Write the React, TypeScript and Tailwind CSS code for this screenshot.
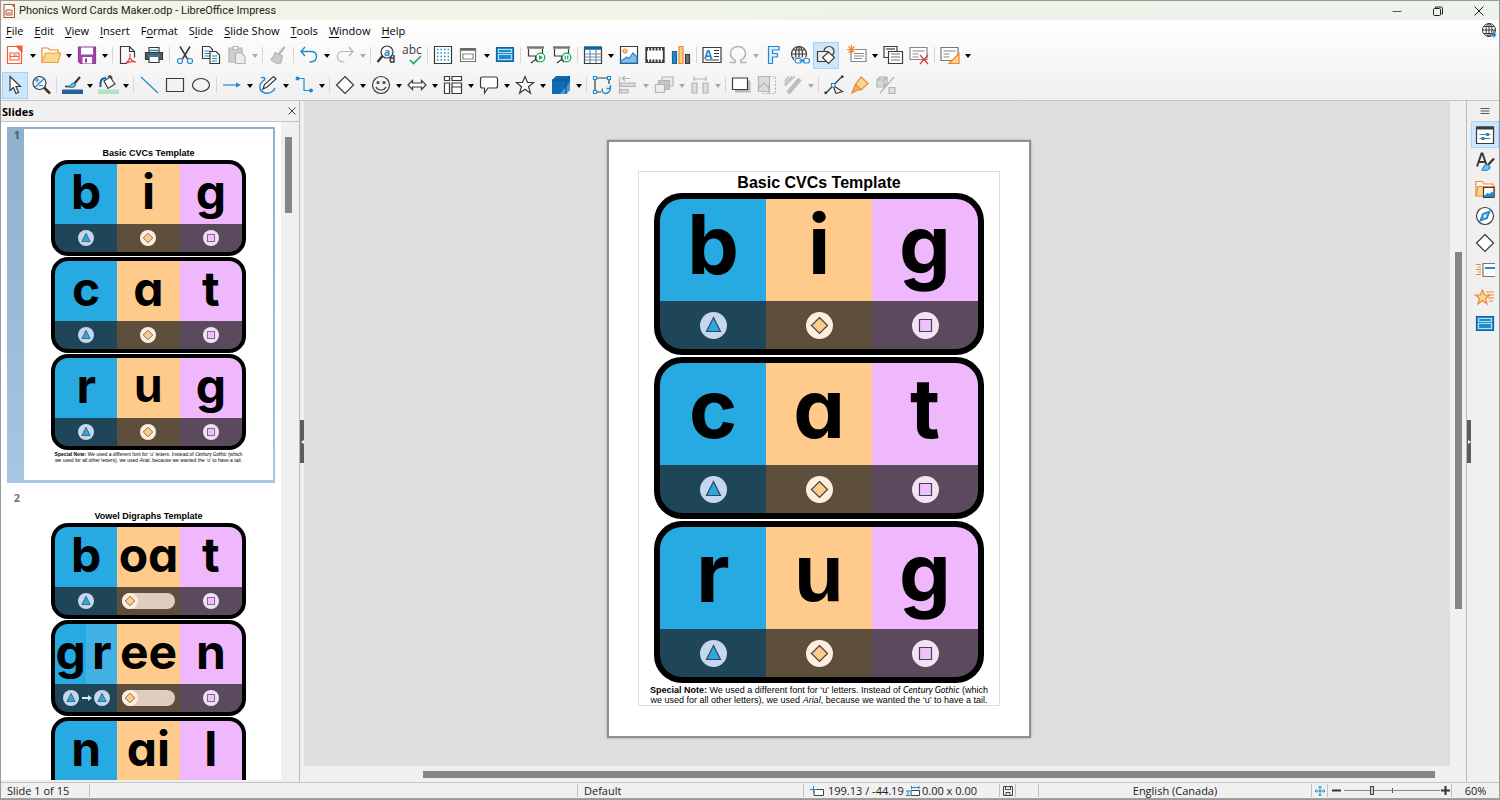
import type { ReactNode } from 'react';

const INK = '#3a3a38';
const BLUE = '#1e8bcd';
const ORANGE = '#ed8733';
const GREY = '#b4b4b4';

function Svg({ children }: { children: ReactNode }) {
  return (
    <svg viewBox="0 0 20 20" className="h-5 w-5 shrink-0 overflow-visible" fill="none" stroke={INK} strokeWidth="1.2" aria-hidden="true">
      {children}
    </svg>
  );
}

const icons: Record<string, ReactNode> = {
  newDoc: (
    <Svg>
      <path d="M2.500 1.500h9l5 5v12h-14z" fill="#fff" stroke="#f0603f" />
      <path d="M12 1h5v5z" fill="#f0603f" stroke="#f0603f" />
      <path d="M5 8h9v7H5zM5 11.500h9M8 10h4" stroke="#f0603f" />
    </Svg>
  ),
  open: (
    <Svg>
      <path d="M1 17V3h6l2 2h8v3" stroke={ORANGE} fill="#fff" />
      <path d="M1 17.500 4.500 8h15L17 17.500z" fill="#fad78f" stroke="#e9a33c" />
    </Svg>
  ),
  save: (
    <Svg>
      <path d="M1.500 2h17v16.500H3.500l-2-2z" fill="#a046a8" stroke="#8e3c97" />
      <path d="M4 2.500h12v7H4zM5.500 12h9.500v6.500H5.500z" fill="#fff" stroke="none" />
      <path d="M8 13.500h2v4H8z" fill="#8e3c97" stroke="none" />
    </Svg>
  ),
  pdf: (
    <Svg>
      <path d="M9 18.500H2.500v-17h9l5 5v6M11.500 1.500v5h5" />
      <path d="M8 18c3-2 4.500-6 4-8-1 3 2 7 6 7-4-1-7 0-10 1z" stroke="#e2383f" />
    </Svg>
  ),
  print: (
    <Svg>
      <path d="M5 7V2.500h10V7" fill="#fff" />
      <path d="M1.500 7.500h17v7h-17z" fill="#5a5a58" />
      <path d="M5 11.500h10v6H5z" fill="#fff" />
      <path d="M4 11h12M5.500 5.500h9" stroke={BLUE} strokeWidth="1.400" />
    </Svg>
  ),
  cut: (
    <Svg>
      <path d="M5 1.500 12.500 14M15 1.500 7.500 14" strokeWidth="1.500" />
      <circle cx="5" cy="16" r="2.500" stroke={BLUE} />
      <circle cx="15" cy="16" r="2.500" stroke={BLUE} />
    </Svg>
  ),
  copy: (
    <Svg>
      <path d="M1.500 1.500h7l3 3v9h-10z" fill="#fff" />
      <path d="M3.500 6h6M3.500 8.500h6M3.500 11h6" stroke={BLUE} />
      <path d="M9 6.500h6l3.500 3.500v8.500H9z" fill="#fff" />
      <path d="M11 11h5M11 13.500h5M11 16h5" stroke={BLUE} />
    </Svg>
  ),
  paste: (
    <Svg>
      <path d="M2 3h13v14H2z" fill="#d0d0d0" stroke={GREY} />
      <path d="M6 1.500h5v3H6z" fill="#fff" stroke={GREY} />
      <path d="M8.500 8h6l3.500 3.500v7H8.500z" fill="#ececec" stroke={GREY} />
    </Svg>
  ),
  brush: (
    <Svg>
      <path d="m16.500 2-5.500 7" stroke={GREY} strokeWidth="2.200" />
      <path d="M7 7.500 14.500 11c-.5 3-1 5.500-2.500 7.500C8 18.500 5 17 3 14.500c2-1.500 3.500-4 4-7z" fill="#cacaca" stroke={GREY} />
    </Svg>
  ),
  undo: (
    <Svg>
      <path d="M6 2 2 6.500 6 11M2.500 6.500H12c4 0 5.500 2 5.500 5s-2 5.500-7 5.500" stroke={BLUE} strokeWidth="1.400" />
    </Svg>
  ),
  redo: (
    <Svg>
      <path d="m14 2 4 4.500L14 11M17.500 6.500H8c-4 0-5.500 2-5.500 5S4.500 17 9.500 17" stroke={GREY} strokeWidth="1.200" />
    </Svg>
  ),
  find: (
    <Svg>
      <circle cx="11" cy="7" r="6" />
      <path d="M6.500 11 1.500 17" strokeWidth="2.400" />
      <text x="8" y="10.500" fontSize="10" fontWeight="700" fontFamily="Open Sans, sans-serif" fill={BLUE} stroke="none">a</text>
      <text x="13" y="18" fontSize="10" fontWeight="700" fontFamily="Open Sans, sans-serif" fill={INK} stroke="none">d</text>
    </Svg>
  ),
  spell: (
    <Svg>
      <text x="0" y="9" fontSize="12" fontFamily="Open Sans, sans-serif" fill={INK} stroke="none">abc</text>
      <path d="m8 15 3.500 3.500L19 11" stroke="#22a85a" strokeWidth="1.600" />
    </Svg>
  ),
  grid: (
    <Svg>
      <path d="M1.500 1.500h17v17h-17z" fill="#fff" />
      <path d="M4 4.500h13M4 8h13M4 11.500h13M4 15h13" stroke={BLUE} strokeWidth="1.500" strokeDasharray="1.500 2" />
    </Svg>
  ),
  display: (
    <Svg>
      <path d="M1.500 3.500h15v13h-15z" fill="#fff" stroke="#777" />
      <path d="M1.500 4.500h15" stroke="#666" strokeWidth="2.500" />
      <path d="M4 9h10v5H4z" stroke="#888" />
    </Svg>
  ),
  master: (
    <Svg>
      <path d="M1.500 2.500h17v14h-17z" fill={BLUE} stroke="#13649b" />
      <path d="M3.500 4.500h13v3h-13zM3.500 9.500h13v5h-13z" stroke="#b5dcf3" />
    </Svg>
  ),
  playFirst: (
    <Svg>
      <path d="M1 2.500h17" strokeWidth="2.500" stroke="#777" />
      <path d="M2.500 4v7h14V4M9.500 11v4M5 18l4.500-3.500L12 17" />
      <circle cx="14.500" cy="12.500" r="4.300" fill="#fff" stroke="#22a85a" />
      <path d="m13 10 4 2.500-4 2.500z" fill="#22a85a" stroke="none" />
    </Svg>
  ),
  playCurrent: (
    <Svg>
      <path d="M1 2.500h17" strokeWidth="2.500" stroke="#777" />
      <path d="M2.500 4v7h14V4M9.500 11v4M5 18l4.500-3.500L12 17" />
      <circle cx="14.500" cy="12.500" r="4.300" fill="#fff" stroke="#22a85a" />
      <path d="M13.300 10.500v4M15.700 10.500v4" stroke="#22a85a" />
    </Svg>
  ),
  table: (
    <Svg>
      <path d="M1.500 2.500h17v16h-17z" fill="#fff" />
      <path d="M1 3h18" strokeWidth="3.500" stroke="#13649b" />
      <path d="M1.500 9h17M1.500 12h17M1.500 15h17M7 5v13M13 5v13" stroke="#6f8ea3" />
    </Svg>
  ),
  image: (
    <Svg>
      <path d="M1.500 1.500h17v17h-17z" fill="#fff" />
      <circle cx="6" cy="6" r="2" fill="#fad78f" stroke={ORANGE} />
      <path d="m2 16 6-4 2 1.500L14 8l4 4v6H2z" fill="#83beec" stroke={BLUE} />
    </Svg>
  ),
  video: (
    <Svg>
      <path d="M1 2.500h18v15H1z" fill="#fff" />
      <path d="M1 4h18M1 16h18" strokeWidth="3" strokeDasharray="2 1.200" />
      <path d="M1.500 2v16M18.500 2v16" />
    </Svg>
  ),
  chart: (
    <Svg>
      <path d="M1.500 6.500h4v12h-4z" fill={BLUE} stroke="#13649b" />
      <path d="M8 1.500h4v17H8z" fill="#fad08a" stroke={ORANGE} />
      <path d="M14.500 9.500h4v9h-4z" fill="#777" />
    </Svg>
  ),
  textBox: (
    <Svg>
      <path d="M1 2.500h18v15H1z" fill="#fff" />
      <text x="2" y="13.500" fontSize="12" fontWeight="700" fontFamily="Open Sans, sans-serif" fill={BLUE} stroke="none">A</text>
      <path d="M12 5.500h5M12 8.500h5M12 11.500h5M3.500 15h13.500" />
    </Svg>
  ),
  omega: (
    <Svg>
      <path d="M1.500 17.500H7v-2.500C4 13.500 2.500 11 2.500 8.500c0-4 3-7 7.500-7s7.500 3 7.500 7c0 2.500-1.500 5-4.500 6.500v2.500h5.500" stroke={GREY} strokeWidth="1.600" />
    </Svg>
  ),
  fontwork: (
    <Svg>
      <path d="M4.500 18.500v-17H15v3.500H8.500v3.500h5v3.500h-5v6.500z" fill="#d9eefb" stroke={BLUE} />
    </Svg>
  ),
  link: (
    <Svg>
      <circle cx="9" cy="9" r="7.500" />
      <ellipse cx="9" cy="9" rx="3.500" ry="7.500" />
      <path d="M1.500 9h15M3 5h12M9 1.500v15M3 13h8" />
      <path d="M4 12.500h16V19H4z" fill="#fafafa" stroke="none" />
      <rect x="5" y="13.500" width="6.500" height="4.500" rx="2.200" stroke={BLUE} />
      <rect x="13" y="13.500" width="6.500" height="4.500" rx="2.200" stroke={BLUE} />
      <path d="M9.500 15.700h5.500" stroke={BLUE} />
    </Svg>
  ),
  shapes: (
    <Svg>
      <circle cx="13" cy="6.500" r="5" fill="#eee" />
      <path d="M1.500 6.500h10v10h-10z" fill="#eee" />
      <path d="m12.500 7 6 5.500-6 6-6-6z" fill="#fff" />
    </Svg>
  ),
  newSlide: (
    <Svg>
      <path d="M4 4.500h15v12H4z" fill="#fff" stroke="#888" />
      <path d="M7 8.500h10M7 11h10M7 13.500h8" stroke="#888" />
      <path d="M4.500 0v9M0 4.500h9M1.500 1.500l6 6M7.500 1.500l-6 6" stroke={ORANGE} />
    </Svg>
  ),
  duplicateSlide: (
    <Svg>
      <path d="M1 1.500h13v11H1z" fill="#fff" />
      <path d="M3 4h9" />
      <path d="M5.500 6.500h14v12h-14z" fill="#fff" />
      <path d="M8 9h9M8 12h9M8 15h9" stroke="#777" />
    </Svg>
  ),
  deleteSlide: (
    <Svg>
      <path d="M1 2.500h17v12H1z" fill="#fff" stroke="#888" />
      <path d="M3.500 6h12M3.500 9h6M3.500 12h6" stroke="#888" />
      <path d="m11 10 8 9M19 10l-8 9" stroke="#e2383f" />
    </Svg>
  ),
  slideLayout: (
    <Svg>
      <path d="M1 2.500h17v13H1z" fill="#fff" stroke="#777" />
      <path d="M3.500 6h12M3.500 9h6M3.500 12h6" stroke="#888" />
      <path d="M19 8.500v10h-10z" fill="#fad78f" stroke={ORANGE} />
    </Svg>
  ),
  select: (
    <Svg>
      <path d="M5 1.500v14l3.500-3 2.500 6 2.500-1-2.500-6h4.500z" fill="#fff" />
    </Svg>
  ),
  zoomPan: (
    <Svg>
      <circle cx="8.500" cy="8" r="6.500" />
      <path d="m13 12.500 6 6" strokeWidth="2.600" />
      <path d="M3.500 5h5M6 2.500v5M8 10.500h4M4 12.500l9-9" stroke={BLUE} />
    </Svg>
  ),
  lineColor: (
    <Svg>
      <path d="M3 11.500h7" strokeWidth="1.600" />
      <path d="M18 2 12 9" strokeWidth="2.200" />
      <path d="M12 8c-3 0-3 3-5 4 3 1 6.500 0 6.500-2.500z" fill="#83beec" stroke={BLUE} />
      <path d="M0 14.500h21v4.500H0z" fill="#2a6099" stroke="none" />
    </Svg>
  ),
  fillColor: (
    <Svg>
      <path d="m6 6 6-4 5 7-7 4.500z" fill="#fff" />
      <path d="M10 2c2-2 4-1 4 2" />
      <path d="M8 3C3 3 2 6 2.500 12" stroke="#13649b" strokeWidth="2" />
      <path d="M0 14.500h21v4.500H0z" fill="#afe5c3" stroke="none" />
    </Svg>
  ),
  line: (
    <Svg>
      <path d="m2 2 17 16" stroke={BLUE} />
    </Svg>
  ),
  rect: (
    <Svg>
      <path d="M1.500 3.500h17v13h-17z" />
    </Svg>
  ),
  ellipse: (
    <Svg>
      <ellipse cx="10" cy="10" rx="8.500" ry="6.500" />
    </Svg>
  ),
  arrow: (
    <Svg>
      <path d="M1 10h14" stroke={BLUE} />
      <path d="m14 7.500 5 2.500-5 2.500z" fill={BLUE} stroke="none" />
    </Svg>
  ),
  curve: (
    <Svg>
      <path d="M3 3c4-2 5 1 2 3-4 3-5 10 2 12 5 1 9-2 10-5" stroke={BLUE} strokeWidth="1.400" />
      <path d="m5 14 1.500-4.500 9-8 2.500 2.500-9 8z" fill="#fff" />
    </Svg>
  ),
  connector: (
    <Svg>
      <path d="M4 3.500h6v12h7" stroke={BLUE} />
      <circle cx="3.500" cy="3.500" r="2" fill={BLUE} stroke="none" />
      <circle cx="17" cy="15.500" r="2" fill={BLUE} stroke="none" />
    </Svg>
  ),
  diamond: (
    <Svg>
      <path d="m10 1.500 8.500 8.500L10 18.500 1.500 10z" fill="#fff" />
    </Svg>
  ),
  smiley: (
    <Svg>
      <circle cx="10" cy="10" r="8.500" />
      <circle cx="7" cy="7.500" r="1" />
      <circle cx="13" cy="7.500" r="1" />
      <path d="M5 12c2 4 8 4 10 0" />
    </Svg>
  ),
  doubleArrow: (
    <Svg>
      <path d="M1 10l4.500-4.500V8h9V5.500L19 10l-4.500 4.500V12h-9v2.500z" fill="#fff" />
    </Svg>
  ),
  flowchart: (
    <Svg>
      <path d="M1.500 1.500h5v4h-5zM9 1.500h9.500v4H9zM1.500 8h5v10.500h-5zM9 8h9.500v4H9zM9 12v6.500h9.500V12" fill="#fff" />
    </Svg>
  ),
  callout: (
    <Svg>
      <path d="M3.500 2h13c1.500 0 2 .5 2 2v7c0 1.500-.5 2-2 2H9l-3.500 5v-5h-2c-1.500 0-2-.5-2-2V4c0-1.500.5-2 2-2z" fill="#fff" />
    </Svg>
  ),
  star: (
    <Svg>
      <path d="m10 1.500 2.500 6h6l-5 4.200 2 6.500-5.500-4-5.500 4 2-6.500-5-4.200h6z" fill="#fff" />
    </Svg>
  ),
  cube: (
    <Svg>
      <path d="M1 5 5 1h14v14l-4 4H1z" fill="#0f69b4" stroke="none" />
      <path d="M19 7v8l-4 4H9z" fill="#4d9ad8" stroke="none" />
      <path d="M1 5h14v14M15 5l4-4" stroke="#0b5797" />
    </Svg>
  ),
  rotate: (
    <Svg>
      <path d="M3 3h14v6M3 3v14h6" />
      <path d="M1.500 1.500h3v3h-3zM15.500 1.500h3v3h-3zM1.500 15.500h3v3h-3z" fill="#fff" stroke={BLUE} />
      <path d="M18 12c1 4-2 6.500-4.500 6.500-3 0-4-3-3-5M18.500 10v3.500h-4" stroke={BLUE} strokeWidth="1.400" />
    </Svg>
  ),
  align: (
    <Svg>
      <path d="M1.500 2v17M5 3.500h7M7 1 4.500 3.500 7 6" stroke={GREY} />
      <path d="M3 8h14v3.500H3zM3 14.500h7V18H3z" fill="#dcdcdc" stroke={GREY} />
    </Svg>
  ),
  arrange: (
    <Svg>
      <path d="M8 2h11v9H8z" fill="#eee" stroke={GREY} />
      <path d="M4.500 5.500h11v9h-11z" fill="#c4c4c4" stroke={GREY} />
      <path d="M1.500 9.500h9v8h-9z" fill="#eee" stroke={GREY} />
    </Svg>
  ),
  distribute: (
    <Svg>
      <path d="M2 8h5v10H2zM13 8h5v10h-5z" fill="#dcdcdc" stroke={GREY} />
      <path d="M4 1v5M16 1v5M4 4h12" stroke={GREY} />
    </Svg>
  ),
  shadow: (
    <Svg>
      <path d="M4 5.500h15.500v12H4z" fill="#b8b8b8" stroke="none" />
      <path d="M1.500 3h15v11.500h-15z" fill="#fff" />
    </Svg>
  ),
  crop: (
    <Svg>
      <path d="M1.500 1.500h11v15h-11z" fill="#dcdcdc" stroke={GREY} />
      <path d="m2 13 5-5 5 5" stroke={GREY} />
      <path d="M12 1.500h6.500v10M5 18.500h13.500v-6M12 10v9" stroke={GREY} strokeDasharray="2 1.500" />
    </Svg>
  ),
  filter: (
    <Svg>
      <path d="M17 4 5 18" stroke="#bdbdbd" strokeWidth="4.500" />
      <path d="M9 1.500 1.500 9M12 1 2 11M6 1.500 1.500 6" stroke={GREY} />
    </Svg>
  ),
  points: (
    <Svg>
      <path d="M18 1.500 2 18M9 10.500l3 8M9 10.500l9.500 6-6.500 2" />
      <path d="M17 .5h2.500V3H17zM.5 16.500H3V19H.5z" fill={INK} stroke="none" />
      <path d="M7.500 8.500h3.500V12H7.500z" fill="#fff" stroke={BLUE} />
    </Svg>
  ),
  glue: (
    <Svg>
      <path d="m11 2 7 6.500-7 6.500-5.500-5.500z" fill="#fad78f" stroke={ORANGE} />
      <path d="m5.500 9.500 5 5-5 1.500L2 18l1.500-4z" fill="#f5b465" stroke={ORANGE} />
    </Svg>
  ),
  extrusion: (
    <Svg>
      <path d="M1 5h7v7H1zM1 5l3-3h7v7l-3 3M8 5l3-3" fill="#d8d8d8" stroke={GREY} />
      <path d="M18 2 4 18" stroke={GREY} />
      <path d="M13 12.500h6v6h-6z" fill="#dcdcdc" stroke={GREY} />
    </Svg>
  ),
  menu: (
    <Svg>
      <path d="M5.500 7.500h9M5.500 10h9M5.500 12.500h9" stroke="#555" />
    </Svg>
  ),
  properties: (
    <Svg>
      <path d="M1.500 2h17v16.500h-17z" fill="#fff" />
      <path d="M1 3h18" strokeWidth="3" />
      <path d="M4.500 9.500h11M4.500 13.500h11" stroke="#777" />
      <path d="M11 8h3v3h-3zM6.500 12h3v3h-3z" fill={BLUE} stroke="none" />
    </Svg>
  ),
  styles: (
    <Svg>
      <path d="m2 14.500 4.500-13h1l4.500 13M3.500 10h7" strokeWidth="2" />
      <path d="m19 6.500-6.500 7" strokeWidth="2.400" />
      <path d="M13 13c-3-1-4 1-6 5 4 1 8 0 8-3z" fill="#83beec" stroke={BLUE} />
    </Svg>
  ),
  gallery: (
    <Svg>
      <path d="M1 17V2.500h6l2 2.500h9v3" stroke={ORANGE} fill="#fff" />
      <path d="M1 17 3 7.500h16.500V17z" fill="#fad78f" stroke={ORANGE} />
      <path d="M8.500 8.500h10.500v10H8.500z" fill="#fff" />
      <path d="m9 17 3.500-3 2 1 2.500-2.500 2 2v3.500H9z" fill={BLUE} stroke="none" />
    </Svg>
  ),
  navigator: (
    <Svg>
      <circle cx="10" cy="10" r="8.500" fill="#fff" />
      <path d="M14.500 5.500 12 12l-6.500 2.500L8 8z" fill="#83beec" stroke={BLUE} strokeWidth="1.800" />
      <circle cx="10" cy="10" r="1.200" fill="#fff" stroke="none" />
    </Svg>
  ),
  transition: (
    <Svg>
      <path d="M20 3.500H8v13h12" fill="#fff" stroke="#777" />
      <path d="M10 8h10" stroke={BLUE} strokeWidth="2" />
      <path d="M1 4.500h5M3 7h3M1 9.500h5M3 12h3M1 14.500h5" stroke={ORANGE} />
    </Svg>
  ),
  animation: (
    <Svg>
      <path d="M11 5h8M13 8h6M13 11h6M14 14h4" stroke={ORANGE} />
      <path d="m7.500 3 2 5h5l-4 3.500 1.500 5.500-4.500-3.500L3 17l1.500-5.500-4-3.500h5z" fill="#fad78f" stroke={ORANGE} />
    </Svg>
  ),
};

type Tool = { icon: string; label: string; menu?: boolean; off?: boolean; on?: boolean } | '|' | ' ';

const standardBar: Tool[] = [
  { icon: 'newDoc', label: 'New', menu: true },
  { icon: 'open', label: 'Open', menu: true },
  { icon: 'save', label: 'Save', menu: true },
  '|',
  { icon: 'pdf', label: 'Export as PDF' },
  { icon: 'print', label: 'Print' },
  '|',
  { icon: 'cut', label: 'Cut' },
  { icon: 'copy', label: 'Copy' },
  { icon: 'paste', label: 'Paste', menu: true, off: true },
  '|',
  { icon: 'brush', label: 'Clone Formatting', off: true },
  '|',
  { icon: 'undo', label: 'Undo', menu: true },
  { icon: 'redo', label: 'Redo', menu: true, off: true },
  '|',
  { icon: 'find', label: 'Find and Replace' },
  { icon: 'spell', label: 'Spelling' },
  '|',
  { icon: 'grid', label: 'Display Grid' },
  { icon: 'display', label: 'Display Views', menu: true },
  { icon: 'master', label: 'Master Slide' },
  '|',
  { icon: 'playFirst', label: 'Start from First Slide' },
  { icon: 'playCurrent', label: 'Start from Current Slide' },
  '|',
  { icon: 'table', label: 'Table', menu: true },
  { icon: 'image', label: 'Insert Image' },
  { icon: 'video', label: 'Insert Audio or Video' },
  { icon: 'chart', label: 'Insert Chart' },
  '|',
  { icon: 'textBox', label: 'Insert Text Box' },
  { icon: 'omega', label: 'Special Character', menu: true, off: true },
  { icon: 'fontwork', label: 'Insert Fontwork' },
  { icon: 'link', label: 'Insert Hyperlink' },
  { icon: 'shapes', label: 'Show Draw Functions', on: true },
  ' ',
  { icon: 'newSlide', label: 'New Slide', menu: true },
  { icon: 'duplicateSlide', label: 'Duplicate Slide' },
  { icon: 'deleteSlide', label: 'Delete Slide' },
  '|',
  { icon: 'slideLayout', label: 'Slide Layout', menu: true },
];

const drawingBar: Tool[] = [
  { icon: 'select', label: 'Select', on: true },
  { icon: 'zoomPan', label: 'Zoom and Pan' },
  '|',
  { icon: 'lineColor', label: 'Line Color', menu: true },
  { icon: 'fillColor', label: 'Fill Color', menu: true },
  '|',
  { icon: 'line', label: 'Line' },
  { icon: 'rect', label: 'Rectangle' },
  { icon: 'ellipse', label: 'Ellipse' },
  '|',
  { icon: 'arrow', label: 'Lines and Arrows', menu: true },
  { icon: 'curve', label: 'Curves and Polygons', menu: true },
  { icon: 'connector', label: 'Connectors', menu: true },
  '|',
  { icon: 'diamond', label: 'Basic Shapes', menu: true },
  { icon: 'smiley', label: 'Symbol Shapes', menu: true },
  { icon: 'doubleArrow', label: 'Block Arrows', menu: true },
  { icon: 'flowchart', label: 'Flowchart', menu: true },
  { icon: 'callout', label: 'Callouts', menu: true },
  { icon: 'star', label: 'Stars and Banners', menu: true },
  { icon: 'cube', label: '3D Objects', menu: true },
  '|',
  { icon: 'rotate', label: 'Rotate' },
  { icon: 'align', label: 'Align Objects', menu: true, off: true },
  { icon: 'arrange', label: 'Arrange', menu: true, off: true },
  { icon: 'distribute', label: 'Distribute', menu: true, off: true },
  '|',
  { icon: 'shadow', label: 'Shadow' },
  { icon: 'crop', label: 'Crop Image', off: true },
  { icon: 'filter', label: 'Filter', menu: true, off: true },
  '|',
  { icon: 'points', label: 'Toggle Point Edit Mode' },
  { icon: 'glue', label: 'Show Gluepoint Functions' },
  { icon: 'extrusion', label: 'Toggle Extrusion', off: true },
];

const sidebarTabs = [
  { icon: 'properties', label: 'Properties', on: true },
  { icon: 'styles', label: 'Styles' },
  { icon: 'gallery', label: 'Gallery' },
  { icon: 'navigator', label: 'Navigator' },
  { icon: 'diamond', label: 'Shapes' },
  { icon: 'transition', label: 'Slide Transition' },
  { icon: 'animation', label: 'Animation' },
  { icon: 'master', label: 'Master Slides' },
];

// [before, mnemonic, after]
const menus = [
  ['', 'F', 'ile'],
  ['', 'E', 'dit'],
  ['', 'V', 'iew'],
  ['', 'I', 'nsert'],
  ['F', 'o', 'rmat'],
  ['S', 'l', 'ide'],
  ['', 'S', 'lide Show'],
  ['', 'T', 'ools'],
  ['', 'W', 'indow'],
  ['', 'H', 'elp'],
];

function Toolbar({ label, tools }: { label: string; tools: Tool[] }) {
  return (
    <div role="toolbar" aria-label={label} className="flex h-[30px] items-center pl-px">
      {tools.map((tool, i) => {
        if (tool === '|') {
          return (
            <span key={i} className="flex w-[5px] shrink-0 justify-center">
              <span className="h-4 w-px bg-[#d6d6d6]" />
            </span>
          );
        }
        if (tool === ' ') return <span key={i} className="w-[5px] shrink-0" />;
        return (
          <span key={i} className="flex shrink-0">
            <button
              type="button"
              aria-label={tool.label}
              disabled={tool.off}
              className={`flex h-[27px] w-[26px] items-center justify-center ${tool.on ? 'border border-[#a6d3f5] bg-[#cce6fb]' : ''}`}
            >
              {icons[tool.icon]}
            </button>
            {tool.menu && (
              <button
                type="button"
                aria-label={`${tool.label} options`}
                disabled={tool.off}
                className={`flex w-[10px] items-center justify-center pt-0.5 ${tool.off ? 'text-[#aaaaaa]' : 'text-black'}`}
              >
                <svg viewBox="0 0 6 4" className="h-1 w-1.5" fill="currentColor" aria-hidden="true">
                  <path d="M0 0h6L3 4z" />
                </svg>
              </button>
            )}
          </span>
        );
      })}
    </div>
  );
}

type Shape = 'triangle' | 'diamond' | 'square';

function Badge({ shape, large }: { shape: Shape; large?: boolean }) {
  return (
    <svg viewBox="0 0 27 27" className={large ? 'h-[27px] w-[27px]' : 'h-4 w-4'} stroke="#3b4450" strokeWidth="1.200" aria-hidden="true">
      {shape === 'triangle' && (
        <>
          <circle cx="13.500" cy="13.500" r="13.500" fill="#c6d6ef" stroke="none" />
          <path d="M13.500 5.500 20.500 19.500h-14z" fill="#27aae1" />
        </>
      )}
      {shape === 'diamond' && (
        <>
          <circle cx="13.500" cy="13.500" r="13.500" fill="#ffeddd" stroke="none" />
          <path d="M13.500 5.500 21.500 13.500l-8 8-8-8z" fill="#ffca8a" />
        </>
      )}
      {shape === 'square' && (
        <>
          <circle cx="13.500" cy="13.500" r="13.500" fill="#f3e2f4" stroke="none" />
          <path d="M7.500 7.500h12v12h-12z" fill="#f1c0fc" />
        </>
      )}
    </svg>
  );
}

function Letters({ text, large, arial }: { text: string; large?: boolean; arial?: boolean }) {
  const size = large ? 'text-[82px] leading-[92px]' : 'text-[48px] leading-[55px]';
  const face = arial ? "font-['Liberation_Sans',sans-serif]" : "font-['Inter',sans-serif] [font-feature-settings:'cv11']";
  return <span className={`whitespace-nowrap font-bold ${size} ${face}`}>{text}</span>;
}

function WordCard({ word, large }: { word: string[]; large?: boolean }) {
  const [first, vowel, last] = word;
  const top = large ? 'h-[102px]' : 'h-[60px]';
  const bottom = large ? 'h-[48px]' : 'h-[28px]';
  return (
    <div
      className={`grid grid-cols-3 overflow-hidden border-black bg-black ${
        large ? 'w-[330px] rounded-[28px] border-[6px]' : 'w-[195px] rounded-[17px] border-4'
      }`}
    >
      {first.length === 2 ? (
        <div className={`grid grid-cols-2 bg-[#27aae1] text-center ${top}`}>
          <Letters text={first[0]} />
          <div className="bg-[#42b2e4]">
            <Letters text={first[1]} />
          </div>
        </div>
      ) : (
        <div className={`flex justify-center bg-[#27aae1] ${top}`}>
          <Letters text={first} large={large} />
        </div>
      )}
      <div className={`flex justify-center bg-[#ffcb8c] ${top}`}>
        <Letters text={vowel} large={large} arial={vowel === 'u'} />
      </div>
      <div className={`flex justify-center bg-[#f0b8fc] ${top}`}>
        <Letters text={last} large={large} />
      </div>
      <div className={`flex items-center justify-center bg-[#1f4558] ${bottom}`}>
        <Badge shape="triangle" large={large} />
        {first.length === 2 && (
          <>
            <svg viewBox="0 0 15 10" className="h-[10px] w-[15px]" stroke="#dce6f5" strokeWidth="2" fill="none" aria-hidden="true">
              <path d="M3 5h8" />
              <path d="M9 2l4 3-4 3z" fill="#dce6f5" stroke="none" />
            </svg>
            <Badge shape="triangle" />
          </>
        )}
      </div>
      <div className={`flex items-center justify-center bg-[#5d4f3c] ${bottom}`}>
        {vowel.length === 2 ? (
          <div className="flex w-[53px] rounded-full bg-[#dfcdbf]">
            <Badge shape="diamond" />
          </div>
        ) : (
          <Badge shape="diamond" large={large} />
        )}
      </div>
      <div className={`flex items-center justify-center bg-[#5b4a5d] ${bottom}`}>
        <Badge shape="square" large={large} />
      </div>
    </div>
  );
}

function SpecialNote() {
  return (
    <>
      <b>Special Note:</b> We used a different font for ‘u’ letters. Instead of{' '}
      <i className="font-['Lato',sans-serif]">Century Gothic</i> (which
      <br />
      we used for all other letters), we used <i>Arial</i>, because we wanted the ‘u’ to have a tail.
    </>
  );
}

const cvcWords = [
  ['b', 'i', 'g'],
  ['c', 'a', 't'],
  ['r', 'u', 'g'],
];

const digraphWords = [
  ['b', 'oa', 't'],
  ['gr', 'ee', 'n'],
  ['n', 'ai', 'l'],
];

function Thumbnail({ index, title, words, note, selected }: { index: number; title: string; words: string[][]; note?: boolean; selected?: boolean }) {
  return (
    <button
      type="button"
      aria-label={`Slide ${index}`}
      className={`flex h-[356px] w-[268px] shrink-0 pt-0.5 pr-0.5 pb-[3px] ${selected ? 'bg-linear-to-b from-[#8fb1cd] to-[#a6c6e3]' : ''}`}
    >
      <span className={`w-[17px] pr-1 text-right text-[11px] leading-[11px] font-bold ${selected ? 'text-[#4c5a66]' : 'text-[#777777]'}`}>
        {index}
      </span>
      <div className="flex h-full flex-1 flex-col items-center bg-white pt-[18px] font-['Liberation_Sans',sans-serif]">
        <span className="text-[9px] leading-[13px] font-bold">{title}</span>
        <div className="flex flex-col gap-px">
          {words.map((word) => (
            <WordCard key={word.join('')} word={word} />
          ))}
        </div>
        {note && (
          <p className="pt-px text-center text-[5px] leading-[6px] whitespace-nowrap">
            <SpecialNote />
          </p>
        )}
      </div>
    </button>
  );
}

function TitleBar() {
  return (
    <header className="flex h-[19px] shrink-0 items-center bg-linear-to-r from-[#f3f4e8] to-[#ebf3ea] pl-0.5">
      <svg viewBox="0 0 12 14" className="h-[14px] w-3" fill="#fff" stroke="#b0532f" aria-hidden="true">
        <path d="M1 .5h7.500L11.500 3.500v10H1z" />
        <path d="M8 0h4v4z" fill="#d2622a" stroke="none" />
        <path d="M3 6h6v5H3zM4 9h4" />
      </svg>
      <h1 className="flex-1 pl-1 font-['Roboto',sans-serif] text-[11px] text-[#222222]">Phonics Word Cards Maker.odp - LibreOffice Impress</h1>
      <button type="button" aria-label="Minimize" className="flex w-[41px] justify-center">
        <svg viewBox="0 0 10 10" className="h-2.5 w-2.5" stroke="#555" aria-hidden="true">
          <path d="M.5 5.500h9" />
        </svg>
      </button>
      <button type="button" aria-label="Restore" className="flex w-[41px] justify-center">
        <svg viewBox="0 0 10 10" className="h-2.5 w-2.5" stroke="#222" fill="none" aria-hidden="true">
          <rect x=".5" y="2.500" width="7" height="7" rx="1" />
          <path d="M2.500 2V1h6l1 1v6h-1" />
        </svg>
      </button>
      <button type="button" aria-label="Close" className="flex w-[41px] justify-center">
        <svg viewBox="0 0 10 10" className="h-2.5 w-2.5" stroke="#222" aria-hidden="true">
          <path d="m.5.5 9 9M9.500.5l-9 9" />
        </svg>
      </button>
    </header>
  );
}

function MenuBar() {
  return (
    <nav className="flex h-5 items-center pr-0.5 pl-[5px]">
      <div className="flex flex-1 gap-[11px]">
        {menus.map(([before, key, after]) => (
          <button key={before + key + after} type="button">
            {before}
            <span className="underline underline-offset-2">{key}</span>
            {after}
          </button>
        ))}
      </div>
      <button type="button" aria-label="Check for updates">
        <svg viewBox="0 0 16 16" className="h-4 w-4" fill="none" stroke={INK} aria-hidden="true">
          <circle cx="8" cy="8" r="6.500" />
          <ellipse cx="8" cy="8" rx="3" ry="6.500" />
          <path d="M1.500 8h13M8 1.500v13M3 4.500h10M3 11.500h10" />
          <path d="M13 8v6M11 12l2 2.500 2-2.500" stroke={BLUE} strokeWidth="1.500" />
        </svg>
      </button>
    </nav>
  );
}

function SlidesPanel() {
  return (
    <aside className="flex w-[299px] shrink-0 flex-col border-r border-[#b9b9b9] bg-[#f0f0f0]">
      <div className="flex h-5 items-center justify-between pr-0.5 pl-px">
        <h2 className="text-[11px] font-bold">Slides</h2>
        <button type="button" aria-label="Close panel" className="p-px">
          <svg viewBox="0 0 8 8" className="h-2 w-2" stroke="#444" aria-hidden="true">
            <path d="m.5.5 7 7M7.500.5l-7 7" />
          </svg>
        </button>
      </div>
      <div className="flex min-h-0 flex-1 border-t border-[#c4c4c4] pb-0.5">
        <div className="flex flex-1 flex-col gap-[7px] overflow-hidden bg-white pt-[5px] pl-1.5">
          <Thumbnail index={1} title="Basic CVCs Template" words={cvcWords} note selected />
          <Thumbnail index={2} title="Vowel Digraphs Template" words={digraphWords} />
        </div>
        <div className="flex w-[18px] flex-col items-center pt-[15px] pr-1">
          <div className="h-[76px] w-[7px] bg-[#868686]" />
        </div>
      </div>
    </aside>
  );
}

function Splitter({ side }: { side: 'left' | 'right' }) {
  return (
    <div className={`flex shrink-0 items-center bg-[#f0f0f0] ${side === 'left' ? 'w-1' : 'w-[5px] border-l border-[#b9b9b9]'}`}>
      <button type="button" aria-label={`Toggle ${side} panel`} className="flex h-[43px] w-1 items-center justify-center bg-[#5c5c5c]">
        <svg viewBox="0 0 3 4" className="h-1 w-[3px]" fill="#fff" aria-hidden="true">
          <path d={side === 'left' ? 'M3 0v4L0 2z' : 'M0 0v4l3-2z'} />
        </svg>
      </button>
    </div>
  );
}

function SlideEditor() {
  return (
    <main className="flex min-w-0 flex-1 flex-col bg-[#f0f0f0]">
      <div className="flex min-h-0 flex-1">
        <div className="flex-1 overflow-hidden bg-[#dededd] pt-[39px] pl-[303px]">
          <div className="w-[424px] border-2 border-[#8f8f8f] bg-white px-[29px] pt-[29px] pb-[30px] font-['Liberation_Sans',sans-serif] shadow-[0_0_2px_#999999]">
            <div className="flex flex-col items-center border border-[#dddddd]">
              <h2 className="text-base leading-[21px] font-bold">Basic CVCs Template</h2>
              <div className="flex flex-col gap-0.5">
                {cvcWords.map((word) => (
                  <WordCard key={word.join('')} word={word} large />
                ))}
              </div>
              <p className="pt-0.5 text-center text-[9px] leading-[10px] whitespace-nowrap">
                <SpecialNote />
              </p>
            </div>
          </div>
        </div>
        <div className="flex w-4 flex-col items-center pt-[151px]">
          <div className="h-[357px] w-[7px] bg-[#868686]" />
        </div>
      </div>
      <div className="flex h-4 items-center pr-[31px] pl-[119px]">
        <div className="h-[7px] flex-1 bg-[#868686]" />
      </div>
    </main>
  );
}

function Sidebar() {
  return (
    <aside className="flex w-7 shrink-0 flex-col items-center bg-[#f0f0f0]">
      <button type="button" aria-label="Sidebar settings" className="flex h-5 w-full items-center justify-center">
        {icons.menu}
      </button>
      {sidebarTabs.map((tab) => (
        <button
          key={tab.icon}
          type="button"
          aria-label={tab.label}
          className={`flex h-[27px] w-full items-center justify-center ${tab.on ? 'border border-[#a6d3f5] bg-[#cce6fb]' : ''}`}
        >
          {icons[tab.icon]}
        </button>
      ))}
    </aside>
  );
}

function StatusBar() {
  return (
    <footer className="flex h-[17px] shrink-0 items-center border-t border-b border-t-[#c4c4c4] border-b-[#a0a0a0] bg-[#f0f0f0] text-[11px] text-[#222222] [&>*]:flex [&>*]:h-[13px] [&>*]:shrink-0 [&>*]:items-center">
      <span className="w-[89px] border-r border-[#c0c0c0] pl-1.5">Slide 1 of 15</span>
      <span className="w-[488px] border-r border-[#c0c0c0]" />
      <span className="w-[226px] border-r border-[#c0c0c0] pl-1.5">Default</span>
      <span className="w-[102px] gap-1 pl-1.5">
        <svg viewBox="0 0 14 10" className="h-2.5 w-3.5" fill="#fff" stroke="#444" aria-hidden="true">
          <path d="M4 3.500h9.500v6H4z" />
          <path d="M0 3.500h7M3.500 0v7" stroke={BLUE} />
        </svg>
        199.13 / -44.19
      </span>
      <span className="w-[94px] gap-0.5 border-r border-[#c0c0c0]">
        <svg viewBox="0 0 14 10" className="h-2.5 w-3.5" fill="#fff" stroke="#444" aria-hidden="true">
          <path d="M5 4.500h8.500v5H5z" />
          <path d="M5 1.500h8.500M5.500 0v3M13 0v3M0 5h4M0 9.500h4M2 5v4" stroke={BLUE} />
        </svg>
        0.00 x 0.00
      </span>
      <span className="w-4 justify-center border-r border-[#c0c0c0]">
        <svg viewBox="0 0 10 10" className="h-2.5 w-2.5" fill="none" stroke="#444" aria-hidden="true">
          <path d="M.5.5h9v9h-9zM2.500.5v3h5v-3M3 9.500v-3h4v3" />
        </svg>
      </span>
      <span className="w-[23px] border-r border-[#c0c0c0]" />
      <span className="min-w-0 flex-1 justify-center border-r border-[#c0c0c0]">English (Canada)</span>
      <button type="button" aria-label="Fit slide to window" className="w-4 justify-center border-r border-[#c0c0c0]">
        <svg viewBox="0 0 12 12" className="h-3 w-3" stroke={BLUE} fill="none" aria-hidden="true">
          <path d="M6 1v10M1 6h10M4.500 2.500 6 1l1.500 1.500M4.500 9.500 6 11l1.500-1.500M2.500 4.500 1 6l1.500 1.500M9.500 4.500 11 6 9.500 7.500" />
        </svg>
      </button>
      <button type="button" aria-label="Zoom out" className="w-4 justify-center">
        <svg viewBox="0 0 9 9" className="h-[9px] w-[9px]" stroke="#333" strokeWidth="2" aria-hidden="true">
          <path d="M0 4.500h9" />
        </svg>
      </button>
      <input
        type="range"
        aria-label="Zoom"
        min={0}
        max={100}
        defaultValue={28}
        className="w-[96px] appearance-none bg-[linear-gradient(#8a8a8a,#8a8a8a),linear-gradient(#555555,#555555)] bg-[length:100%_1px,1px_5px] bg-center bg-no-repeat [&::-webkit-slider-thumb]:h-[9px] [&::-webkit-slider-thumb]:w-1 [&::-webkit-slider-thumb]:appearance-none [&::-webkit-slider-thumb]:border [&::-webkit-slider-thumb]:border-[#444444] [&::-webkit-slider-thumb]:bg-[#cccccc]"
      />
      <button type="button" aria-label="Zoom in" className="w-3 justify-center border-r border-[#c0c0c0]">
        <svg viewBox="0 0 9 9" className="h-[9px] w-[9px]" stroke="#333" strokeWidth="2" aria-hidden="true">
          <path d="M0 4.500h9M4.500 0v9" />
        </svg>
      </button>
      <span className="w-[47px] justify-center">60%</span>
    </footer>
  );
}

export default function App() {
  return (
    <div className="flex h-screen flex-col overflow-hidden border border-[#9a9a9a] bg-[#f0f0f0] font-['Open_Sans','Noto_Sans',sans-serif] text-[11px] leading-none text-black">
      <TitleBar />
      <div className="shrink-0 border-b border-[#c6c6c6] bg-linear-to-b from-white to-[#f0f0f0]">
        <MenuBar />
        <Toolbar label="Standard" tools={standardBar} />
        <Toolbar label="Drawing" tools={drawingBar} />
      </div>
      <div className="flex min-h-0 flex-1">
        <SlidesPanel />
        <Splitter side="left" />
        <SlideEditor />
        <Splitter side="right" />
        <Sidebar />
      </div>
      <StatusBar />
    </div>
  );
}
